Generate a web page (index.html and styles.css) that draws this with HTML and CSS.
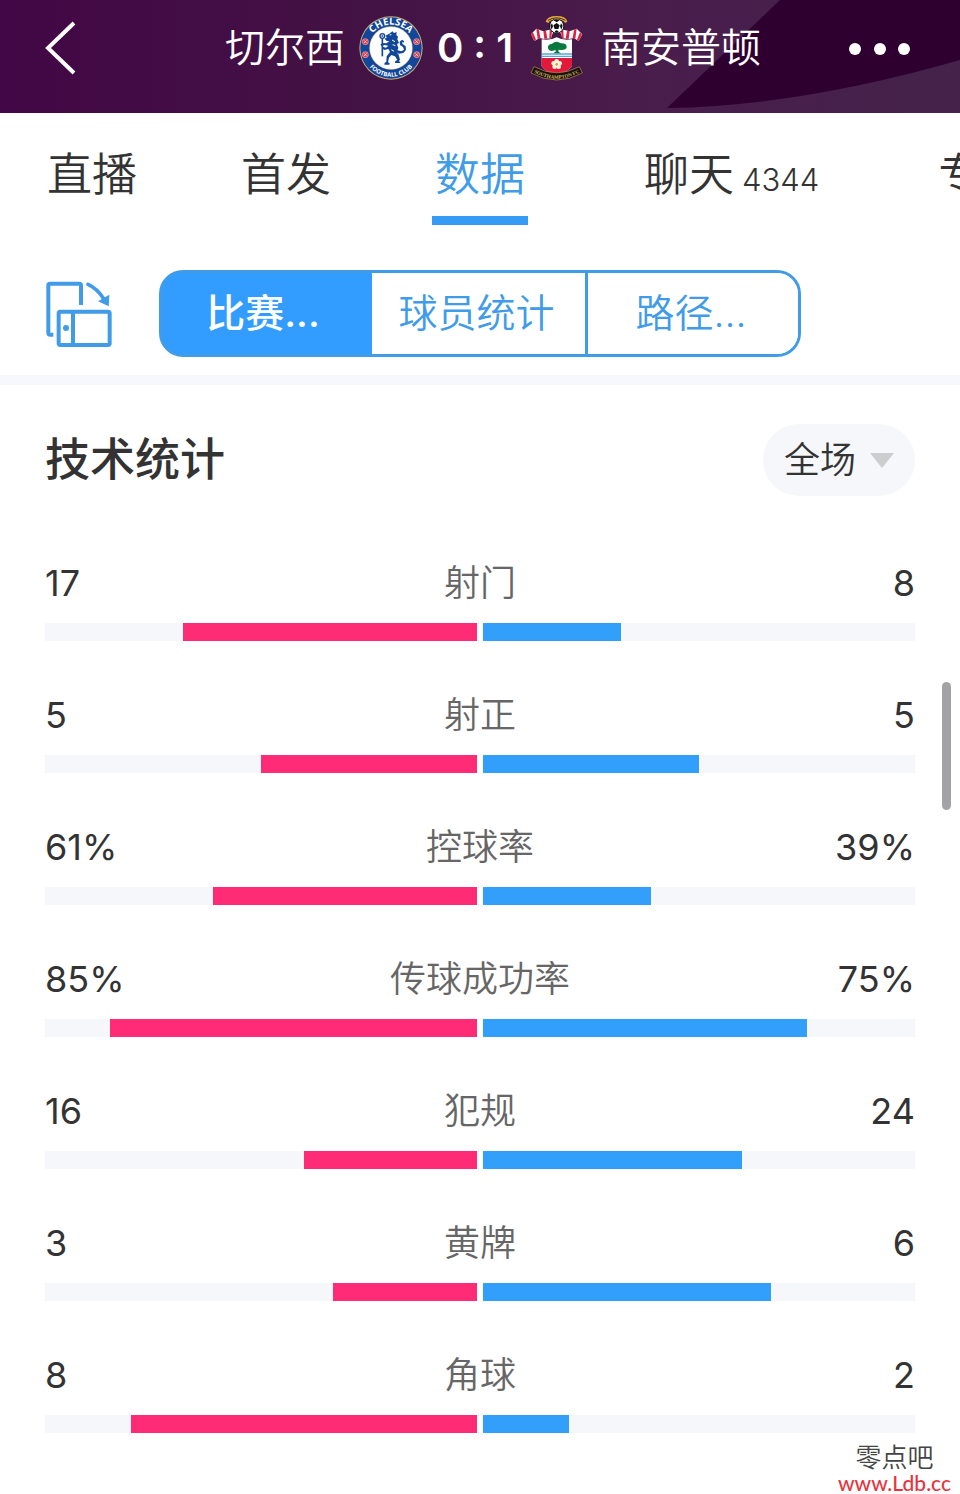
FILE: index.html
```html
<!DOCTYPE html>
<html lang="zh-CN">
<head>
<meta charset="utf-8">
<meta name="viewport" content="width=device-width, initial-scale=1">
<title>切尔西 0 : 1 南安普顿</title>
<link rel="stylesheet" href="styles.css">
</head>
<body>
<header class="header">
  <svg class="header-art" viewBox="0 0 960 113" preserveAspectRatio="xMaxYMid slice" aria-hidden="true">
    <path d="M780 0L667 108Q800 106 960 60V0Z" fill="#2e0030"/>
  </svg>
  <button class="back" type="button" aria-label="返回">
    <svg width="32" height="56" viewBox="0 0 32 56" fill="none" stroke="#fff" stroke-width="4"><path d="M30 3L4 28L30 53"/></svg>
  </button>
  <h1 class="match">
    <span>切尔西</span>
    <svg class="crest-home" width="64" height="64" viewBox="24 27 192 192" role="img" aria-label="Chelsea">
      <defs>
        <path id="arc-top" d="M50 123A70 70 0 0 1 190 123"/>
        <path id="arc-bottom" d="M34 123A86 86 0 0 0 206 123"/>
      </defs>
      <circle cx="120" cy="123" r="95" fill="#c9b078"/>
      <circle cx="120" cy="123" r="92" fill="#12469b"/>
      <circle cx="120" cy="123" r="65" fill="#d9c999"/>
      <circle cx="120" cy="123" r="63" fill="#fff"/>
      <text class="crest-name"><textPath href="#arc-top" startOffset="50%">CHELSEA</textPath></text>
      <text class="crest-sub"><textPath href="#arc-bottom" startOffset="50%">FOOTBALL CLUB</textPath></text>
      <g fill="#e8354a" stroke="#f3b6bd" stroke-width="2">
        <circle cx="43" cy="104" r="9"/><circle cx="43" cy="143" r="9"/>
        <circle cx="197" cy="104" r="9"/><circle cx="197" cy="143" r="9"/>
      </g>
      <g fill="none" stroke="#fff" stroke-width="2"><path d="M39 100l8 8m0-8l-8 8M39 139l8 8m0-8l-8 8M193 100l8 8m0-8l-8 8M193 139l8 8m0-8l-8 8"/></g>
      <path d="M117 79l7-6 5 5 8-3-1 9 5 5-2 8 5 11-6 3 4 12-5 13 6 7 4 15-3 4 5 6h-17l1-6 6-3-7-11-11-4-7 8-3 14 5 3-1 4h-15l1-6 5-3 1-16 10-13-5-9-12 3-7-5 4-4 8 2 7-6-12-2-8 4-4-5 7-5 11 1 9-6-9-2-5-6 7-4-5-5Z" fill="#12469b"/>
      <path d="M137 129l14 4 8-5-3-8-9-6-1-10 7-6 7 5-3 4-4-2 1 5 10 8 1 11-8 9-13 2-9-4Z" fill="#12469b"/>
      <path d="M94 94V148" stroke="#12469b" stroke-width="5"/>
      <circle cx="94" cy="87" r="7" fill="#fff" stroke="#12469b" stroke-width="4"/>
      <path d="M90 87h8M94 83v8" stroke="#12469b" stroke-width="2"/>
      <path d="M116 84l5-1M123 99l9 5M125 113l8 3M121 128l8 5" stroke="#fff" stroke-width="3"/>
    </svg>
    <span class="score">0 : 1</span>
    <svg class="crest-away" width="54" height="66" viewBox="32 26 162 198" role="img" aria-label="Southampton">
      <defs><path id="ribbon" d="M38 195Q112 239 186 195"/></defs>
      <path d="M79 46Q83 29 112 29T144 46L137 50Q131 39 112 39T87 50Z" fill="#e5a93f"/>
      <path d="M86 42Q112 27 138 42" fill="none" stroke="#473015" stroke-width="3"/>
      <path d="M35 84L51 67 72 75 91 70 102 75 95 96 75 98 61 95 45 104Z" fill="#fff"/>
      <path d="M189 84L172 67 151 75 132 70 122 75 129 96 149 98 163 95 178 104Z" fill="#fff"/>
      <g fill="#dc2340">
        <path d="M35 84l6-6 9 22-5 4ZM51 67l8 3 4 25-8 3ZM72 75l8-2 4 24-9 1ZM91 70l7 3-2 22-6 1ZM188 84l-6-6-9 22 5 4ZM172 67l-8 3-4 25 8 3ZM151 75l-8-2-4 24 9 1ZM132 70l-7 3 2 22 6 1Z"/>
      </g>
      <circle cx="112" cy="59" r="22" fill="#080808"/><circle cx="112" cy="59" r="20" fill="#fff"/>
      <path d="M112 50l9 7-4 11h-11l-4-11ZM102 42l10-3 9 3-9 6ZM93 58l5-7 3 9-4 10ZM130 58l-5-7-3 9 4 10ZM106 75l6-3 6 3-3 4h-6Z" fill="#111"/>
      <path d="M67 99Q95 103 112 93Q130 103 158 99V180Q140 201 112 204Q82 200 67 180Z" fill="#fff"/>
      <path d="M67 155H158V180Q140 201 112 204Q82 200 67 180Z" fill="#e2193b"/>
      <path d="M67 143H158M67 150H158" stroke="#56a8d8" stroke-width="4"/>
      <path d="M86 124Q85 114 98 112Q111 101 124 111Q143 110 142 123Q140 132 124 131L117 130 118 137 125 141H101L109 136V131L98 134Q87 133 86 124Z" fill="#08783e"/>
      <g fill="#fff3dc"><circle cx="112" cy="165" r="7"/><circle cx="121" cy="171" r="7"/><circle cx="118" cy="181" r="7"/><circle cx="106" cy="181" r="7"/><circle cx="103" cy="171" r="7"/></g>
      <circle cx="112" cy="174" r="4" fill="#d7a93b"/>
      <path d="M44 181Q112 218 180 181L189 200Q112 242 35 200Z" fill="#17120b" stroke="#b89250" stroke-width="2"/>
      <text class="ribbon-text"><textPath href="#ribbon" startOffset="50%">SOUTHAMPTON FC</textPath></text>
    </svg>
    <span>南安普顿</span>
  </h1>
  <button class="more" type="button" aria-label="更多">
    <svg width="62" height="14" viewBox="0 0 62 14" fill="#fff"><circle cx="6" cy="8" r="6"/><circle cx="31" cy="8" r="6"/><circle cx="55" cy="8" r="6"/></svg>
  </button>
</header>

<nav class="tabs">
  <a class="tab" href="#live">直播</a>
  <a class="tab" href="#lineup">首发</a>
  <a class="tab tab-active" href="#stats" aria-current="page">数据</a>
  <a class="tab tab-wide" href="#chat">聊天<span class="count">4344</span></a>
  <a class="tab" href="#special">专题</a>
</nav>

<div class="toolbar">
  <button class="rotate" type="button" aria-label="横屏">
    <svg width="66" height="66" viewBox="48 60 198 198" fill="none" stroke="#409ce8" stroke-width="12">
      <path d="M70 221H61Q55 221 55 215V73Q55 68 60 68H148Q153 68 153 73V132"/>
      <rect x="86" y="152" width="153" height="100" rx="5"/>
      <path d="M129 152V252"/>
      <circle cx="108" cy="201" r="9" fill="#409ce8" stroke="none"/>
      <path d="M174 70Q201 82 221 113" stroke-linecap="round" stroke-width="11"/>
      <path d="M204 121L238 101L236 136Z" fill="#409ce8" stroke="none"/>
    </svg>
  </button>
  <div class="segments">
    <button class="segment segment-active" type="button">比赛...</button>
    <button class="segment" type="button">球员统计</button>
    <button class="segment" type="button">路径...</button>
  </div>
</div>

<main class="stats" id="stats">
  <div class="stats-head">
    <h2 class="title">技术统计</h2>
    <div class="period">
      <select class="period-select" aria-label="时段"><option>全场</option></select>
      <svg class="period-arrow" width="24" height="15" viewBox="0 0 24 15" aria-hidden="true"><path d="M0 0H24L12 15Z" fill="#cccdcf"/></svg>
    </div>
  </div>
  <section class="stat">
    <div class="labels"><span>17</span><span class="name">射门</span><span class="away">8</span></div>
    <div class="bars"><div class="track track-home"><div class="fill fill-home" style="width:68%"></div></div><div class="track"><div class="fill fill-away" style="width:32%"></div></div></div>
  </section>
  <section class="stat">
    <div class="labels"><span>5</span><span class="name">射正</span><span class="away">5</span></div>
    <div class="bars"><div class="track track-home"><div class="fill fill-home" style="width:50%"></div></div><div class="track"><div class="fill fill-away" style="width:50%"></div></div></div>
  </section>
  <section class="stat">
    <div class="labels"><span>61%</span><span class="name">控球率</span><span class="away">39%</span></div>
    <div class="bars"><div class="track track-home"><div class="fill fill-home" style="width:61%"></div></div><div class="track"><div class="fill fill-away" style="width:39%"></div></div></div>
  </section>
  <section class="stat">
    <div class="labels"><span>85%</span><span class="name">传球成功率</span><span class="away">75%</span></div>
    <div class="bars"><div class="track track-home"><div class="fill fill-home" style="width:85%"></div></div><div class="track"><div class="fill fill-away" style="width:75%"></div></div></div>
  </section>
  <section class="stat">
    <div class="labels"><span>16</span><span class="name">犯规</span><span class="away">24</span></div>
    <div class="bars"><div class="track track-home"><div class="fill fill-home" style="width:40%"></div></div><div class="track"><div class="fill fill-away" style="width:60%"></div></div></div>
  </section>
  <section class="stat">
    <div class="labels"><span>3</span><span class="name">黄牌</span><span class="away">6</span></div>
    <div class="bars"><div class="track track-home"><div class="fill fill-home" style="width:33.33%"></div></div><div class="track"><div class="fill fill-away" style="width:66.67%"></div></div></div>
  </section>
  <section class="stat">
    <div class="labels"><span>8</span><span class="name">角球</span><span class="away">2</span></div>
    <div class="bars"><div class="track track-home"><div class="fill fill-home" style="width:80%"></div></div><div class="track"><div class="fill fill-away" style="width:20%"></div></div></div>
  </section>
</main>
<div class="scroll-thumb"></div>
<div class="watermark"><span>零点吧</span><span class="watermark-url">www.Ldb.cc</span></div>
</body>
</html>
```
FILE: styles.css
```css
* { box-sizing: border-box; }
body {
  position: relative;
  margin: 0;
  background: #fff;
  color: #333;
  font-family: Inter, "Noto Sans CJK SC", sans-serif;
  font-size: 36px;
  font-weight: 350;
}
button, select {
  margin: 0;
  padding: 0;
  border: 0;
  background: none;
  color: inherit;
  font: inherit;
}
svg { display: block; flex: none; }

.header {
  position: relative;
  display: grid;
  grid-template-columns: 1fr auto 1fr;
  align-items: center;
  min-height: 113px;
  padding: 0 18px 18px 44px;
  background: linear-gradient(90deg, #420746, #431144 35%, #491d4c 68%, #44234a);
  color: #fff;
}
.header-art { position: absolute; top: 0; left: 0; width: 100%; height: 100%; }
.back, .match, .more { position: relative; }
.back { justify-self: start; }
.more { justify-self: end; padding-right: 31px; }
.match {
  display: flex;
  align-items: center;
  margin: 0;
  font-size: 40px;
  font-weight: 350;
  line-height: 60px;
  white-space: nowrap;
}
.crest-home { margin: 0 14px; }
.crest-away { margin: 0 17px; }
.score { font-weight: 600; }
.crest-name, .crest-sub { fill: #fff; font-family: "Open Sans", sans-serif; font-weight: 700; text-anchor: middle; }
.crest-name { font-size: 29px; }
.crest-sub { font-size: 18px; }
.ribbon-text { fill: #dcb867; font-family: "Liberation Serif", serif; font-size: 15px; font-weight: 700; text-anchor: middle; }

.tabs {
  display: flex;
  gap: 98px;
  padding: 31px 0 0 44px;
  overflow: hidden;
}
.tab {
  flex: none;
  height: 81px;
  padding: 0 3px;
  border-bottom: 9px solid transparent;
  color: #333;
  font-size: 45px;
  line-height: 62px;
  text-decoration: none;
}
.tab-active { border-color: #369bf5; color: #409ce8; }
.tab-wide { padding: 0 18px; }
.count { margin-left: 8px; font-size: 31px; line-height: 31px; }

.toolbar {
  display: flex;
  align-items: center;
  gap: 47px;
  padding: 45px 159px 18px 46px;
  border-bottom: 10px solid #f5f8fc;
}
.segments {
  flex: 1;
  display: grid;
  grid-template-columns: 35fr 36fr 35fr;
  border: 3px solid #409ce8;
  border-radius: 24px;
  background: linear-gradient(90deg, #329dff 50%, #fff 50%);
  overflow: hidden;
}
.segment {
  height: 81px;
  padding: 0 4px 8px 0;
  border-right: 3px solid #409ce8;
  background: #fff;
  color: #409ce8;
  font-size: 39px;
}
.segment:last-child { border-right: 0; }
.segment-active { padding-right: 8px; border-right: 0; background: #329dff; color: #fff; font-weight: 500; }

.stats { padding: 39px 45px 9px; }
.stats-head { display: flex; justify-content: space-between; align-items: center; margin-bottom: 65px; }
.title { margin: 0; font-size: 45px; font-weight: 500; line-height: 72px; }
.period { position: relative; }
.period-select {
  appearance: none;
  width: 152px;
  height: 72px;
  padding: 0 60px 0 21px;
  border-radius: 36px;
  background: #f5f7fa;
}
.period-arrow { position: absolute; top: 29px; right: 21px; pointer-events: none; }

.stat { margin-bottom: 52px; }
.labels { display: grid; grid-template-columns: 1fr auto 1fr; line-height: 44px; margin-bottom: 18px; font-weight: 400; }
.name { color: #666; font-weight: 350; }
.away { text-align: right; }
.bars { display: grid; grid-template-columns: 1fr 1fr; gap: 6px; }
.track { display: flex; height: 18px; background: #f5f7fa; }
.track-home { justify-content: flex-end; }
.fill-home { background: #ff2b75; }
.fill-away { background: #32a0fa; }

.scroll-thumb { position: absolute; top: 682px; right: 9px; width: 9px; height: 128px; border-radius: 5px; background: #a3a3a6; }
.watermark {
  position: absolute;
  right: 9px;
  bottom: 0;
  display: flex;
  flex-direction: column;
  align-items: center;
  color: #444;
  font-size: 26px;
  line-height: 28px;
}
.watermark-url { color: #e8333c; font-family: Lato, sans-serif; font-size: 21px; font-weight: 500; line-height: 22px; }
```
